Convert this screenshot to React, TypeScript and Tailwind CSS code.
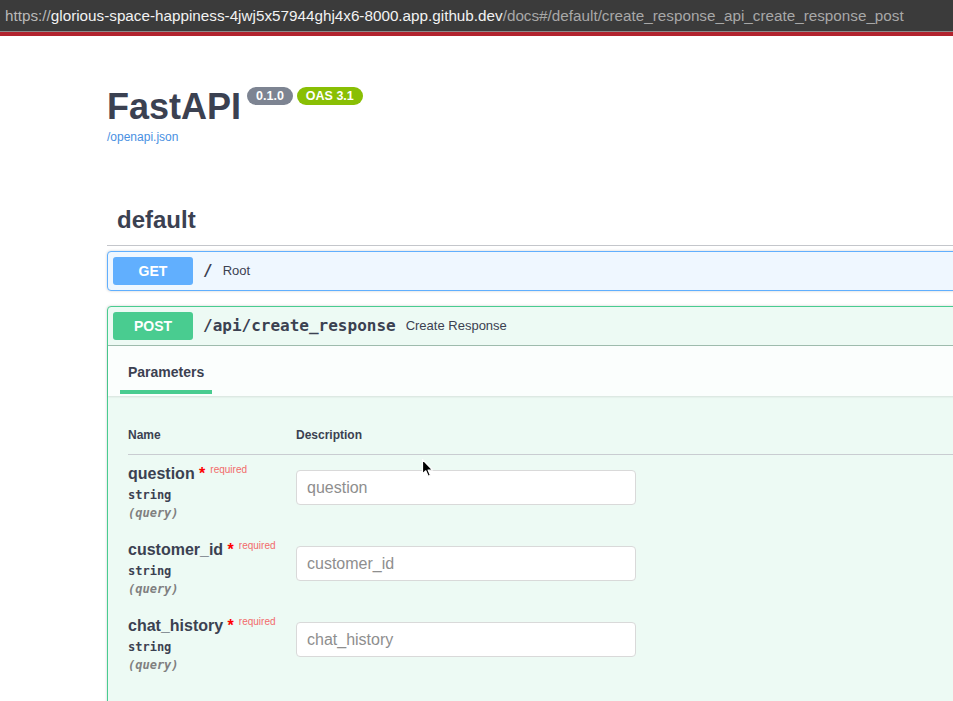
import type { ReactNode } from "react";

type Param = {
  name: string;
  type: string;
  where: string;
};

const params: Param[] = [
  { name: "question", type: "string", where: "(query)" },
  { name: "customer_id", type: "string", where: "(query)" },
  { name: "chat_history", type: "string", where: "(query)" },
];

function UrlBar() {
  return (
    <div>
      <div className="flex h-[31px] items-center bg-[#3b3b3b] px-[5px] text-[15.25px] leading-none">
        <span className="text-[#b9b9b9]">https://</span>
        <span className="text-[#f2f2f2]">glorious-space-happiness-4jwj5x57944ghj4x6-8000.app.github.dev</span>
        <span className="text-[#a8a8a8]">/docs#/default/create_response_api_create_response_post</span>
      </div>
      <div className="h-px bg-[#8a8a8a]" />
      <div className="h-[4px] bg-[#b1232e]" />
    </div>
  );
}

function Badge({ color, children }: { color: string; children: ReactNode }) {
  return (
    <span
      className={`flex h-[18px] items-center rounded-full px-[9px] text-[12.5px] font-bold leading-none text-white ${color}`}
    >
      {children}
    </span>
  );
}

function MethodTag({ color, label }: { color: string; label: string }) {
  return (
    <span
      className={`flex h-[28px] w-[80px] shrink-0 items-center justify-center rounded-[3px] text-[14px] font-bold text-white ${color}`}
    >
      {label}
    </span>
  );
}

function ParamRow({ param }: { param: Param }) {
  return (
    <div className="flex h-[76px]">
      <div className="w-[168px] shrink-0 pt-[9px]">
        <div className="flex items-start text-[16px] font-bold leading-[20px] text-[#3b4151]">
          <span>{param.name}</span>
          <span className="text-[#ff0000]">&nbsp;*</span>
          <span className="relative -top-[4px] pl-[5px] text-[10px] font-normal leading-[20px] text-[#f26b6b]">
            required
          </span>
        </div>
        <div className="mt-[2px] font-['DejaVu_Sans_Mono',monospace] text-[12px] font-bold leading-[18px] text-[#3b4151]">
          {param.type}
        </div>
        <div className="font-['DejaVu_Sans_Mono',monospace] text-[12px] font-bold italic leading-[18px] text-[#808080]">
          {param.where}
        </div>
      </div>
      <div className="pt-[15px]">
        <input
          readOnly
          placeholder={param.name}
          className="h-[35px] w-[340px] rounded-[4px] border border-[#d9d9d9] bg-white px-[10px] text-[16px] text-[#3b4151] outline-none placeholder:text-[#8e8e8e]"
        />
      </div>
    </div>
  );
}

function Cursor() {
  return (
    <svg
      className="absolute left-[421px] top-[458px]"
      width="13"
      height="20"
      viewBox="0 0 13 20"
    >
      <path
        d="M1.5 1.5 L1.5 16 L4.8 12.8 L7.2 18.3 L9.4 17.3 L7.1 12 L11.6 12 Z"
        fill="#000"
        stroke="#fff"
        strokeWidth="1.2"
        strokeLinejoin="round"
      />
    </svg>
  );
}

export default function App() {
  return (
    <div className="relative h-[701px] w-[953px] overflow-hidden bg-white font-['Liberation_Sans',Arial,sans-serif] text-[#3b4151]">
      <UrlBar />

      <div className="w-[1400px] pl-[107px]">
        <div className="mt-[51px] flex items-start">
          <h2 className="pt-[2px] text-[36px] font-bold leading-[36px] text-[#3b4151]">FastAPI</h2>
          <div className="ml-[6px] flex gap-[4px]">
            <Badge color="bg-[#7d8492]">0.1.0</Badge>
            <Badge color="bg-[#89bf04]">OAS 3.1</Badge>
          </div>
        </div>
        <p className="mt-[4px] text-[12px] leading-[16px] text-[#4990e2]">/openapi.json</p>

        <h3 className="mt-[63px] border-b border-[#c4c6cb] pb-[13px] pl-[10px] text-[24px] font-bold leading-[24px] text-[#3b4151]">
          default
        </h3>

        <div className="mt-[5px] flex items-center rounded-[4px] border border-[#61affe] bg-[#eff7ff] p-[5px] shadow-[0_0_3px_rgba(0,0,0,0.19)]">
          <MethodTag color="bg-[#61affe]" label="GET" />
          <span className="px-[10px] font-['DejaVu_Sans_Mono',monospace] text-[16px] font-bold text-[#3b4151]">/</span>
          <span className="text-[13px] text-[#3b4151]">Root</span>
        </div>

        <div className="mt-[15px] h-[500px] rounded-[4px] border border-[#49cc90] bg-[#edfaf4] shadow-[0_0_3px_rgba(0,0,0,0.19)]">
          <div className="flex items-center border-b border-[#9fbcae] p-[5px]">
            <MethodTag color="bg-[#49cc90]" label="POST" />
            <span className="px-[10px] font-['DejaVu_Sans_Mono',monospace] text-[16px] font-bold text-[#3b4151]">
              /api/create_response
            </span>
            <span className="text-[13px] text-[#3b4151]">Create Response</span>
          </div>

          <div className="flex h-[50px] bg-[#fbfefd] pl-[12px] shadow-[0_1px_2px_rgba(0,0,0,0.1)]">
            <div className="flex w-[92px] flex-col">
              <span className="pl-[8px] pt-[16px] text-[14px] font-bold leading-[20px] text-[#3b4151]">Parameters</span>
              <span className="mt-[8px] h-[4px] bg-[#49cc90]" />
            </div>
          </div>

          <div className="pl-[20px] pt-[31px]">
            <div className="flex border-b border-[#c9ccd1] pb-[11px] text-[12px] font-bold leading-[16px] text-[#3b4151]">
              <span className="w-[168px]">Name</span>
              <span>Description</span>
            </div>
            {params.map((param) => (
              <ParamRow key={param.name} param={param} />
            ))}
          </div>
        </div>
      </div>

      <Cursor />
    </div>
  );
}
